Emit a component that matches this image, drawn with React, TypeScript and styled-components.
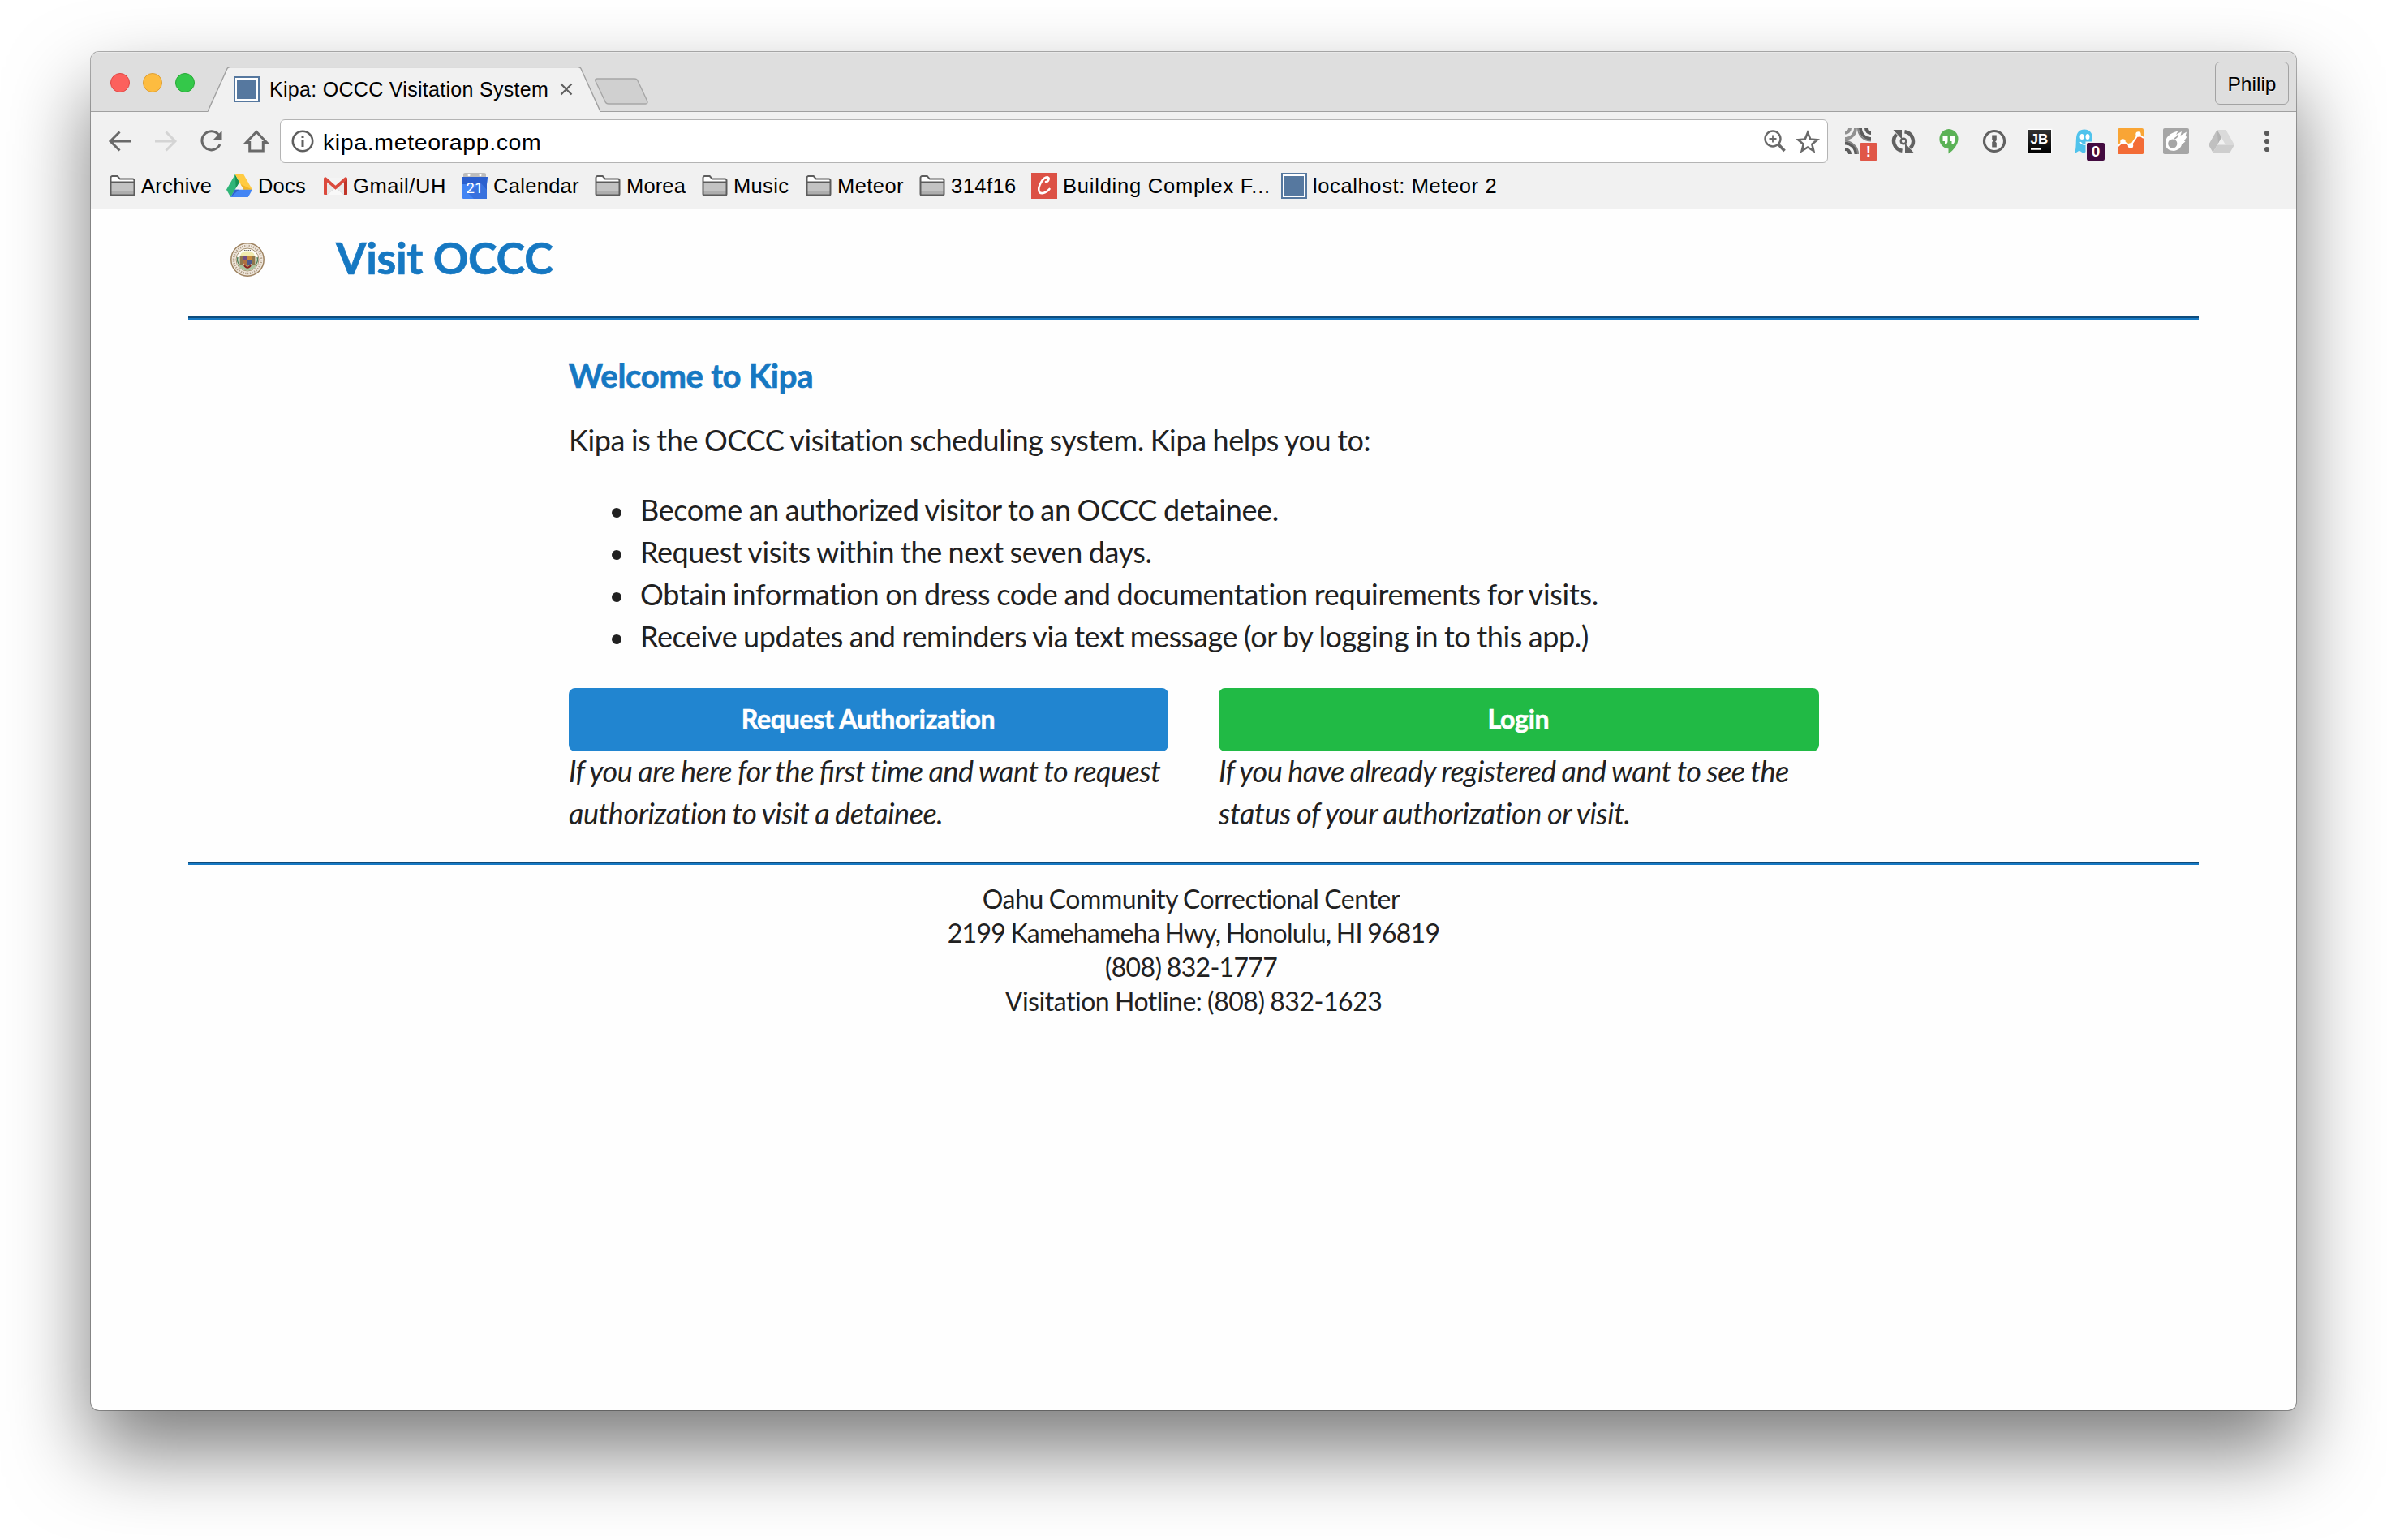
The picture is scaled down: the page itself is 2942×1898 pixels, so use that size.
import React from "react";
import styled, { createGlobalStyle } from "styled-components";

const Global = createGlobalStyle`
  * { box-sizing: border-box; }
  html, body { margin: 0; background: #fff; }
  body { font-family: "Liberation Sans", Arial, sans-serif; color: #000; }
`;

/* ---------- window frame ---------- */

const Desktop = styled.div`
  width: 2942px;
  height: 1898px;
  padding: 64px 112px 160px;
  overflow: hidden;
  background: #fff;
`;

const BrowserWindow = styled.div`
  display: flex;
  flex-direction: column;
  width: 2718px;
  height: 1674px;
  border-radius: 10px;
  overflow: hidden;
  background: #fefefe;
  box-shadow: 0 0 0 1px rgba(0, 0, 0, 0.3), 0 50px 100px rgba(0, 0, 0, 0.52);
`;

const TabStrip = styled.div`
  display: flex;
  flex: none;
  height: 74px;
  padding: 0 9px 0 24px;
  background: #dedede;
  border-bottom: 1px solid #a0a0a0;
  box-shadow: inset 0 1px 0 #e9e9e9;
`;

const TrafficLights = styled.div`
  display: flex;
  gap: 16px;
  width: 120px;
  padding-top: 26px;
`;

const Light = styled.span<{ $fill: string; $edge: string }>`
  width: 24px;
  height: 24px;
  border-radius: 50%;
  background: ${(p) => p.$fill};
  border: 1px solid ${(p) => p.$edge};
`;

const Tab = styled.div`
  position: relative;
  display: flex;
  align-items: center;
  width: 484px;
  height: 56px;
  margin-top: 18px;
  padding-left: 32px;
`;

const TabShape = styled.svg`
  position: absolute;
  left: 0;
  top: 0;
`;

const TabTitle = styled.span`
  position: relative;
  width: 370px;
  padding-left: 12px;
  font-size: 25px;
  letter-spacing: 0.3px;
  line-height: 30px;
  margin-top: -1px;
  white-space: nowrap;
`;

const Favicon = styled.span`
  position: relative;
  flex: none;
  width: 32px;
  height: 32px;
  border: 2px solid #56789f;
  background: #56789f;
  box-shadow: inset 0 0 0 2px #fff;
`;

const CloseIcon = styled.svg`
  position: relative;
`;

const NewTab = styled.svg`
  margin: 32px auto 0 -8px;
`;

const ProfileButton = styled.div`
  width: 91px;
  height: 53px;
  margin-top: 12px;
  border: 1.5px solid #a3a3a3;
  border-radius: 6px;
  font-size: 24.5px;
  line-height: 53px;
  text-align: center;
  text-shadow: 0 1px 0 #f4f4f4;
`;

/* ---------- toolbar ---------- */

const Toolbar = styled.div`
  display: flex;
  flex: none;
  align-items: center;
  height: 70px;
  padding: 2px 0 0 20px;
  background: #f1f1f1;
`;

const NavIcons = styled.div`
  display: flex;
  gap: 24px;
  width: 213px;
`;

const Omnibox = styled.div`
  display: flex;
  align-items: center;
  width: 1908px;
  height: 54px;
  padding: 0 9px 0 13px;
  border: 1.5px solid #b4b4b4;
  border-radius: 6px;
  background: #fff;
`;

const Url = styled.span`
  flex: 1;
  padding: 1px 0 0 11px;
  font-size: 28.5px;
  letter-spacing: 0.62px;
  line-height: 34px;
`;

const Extensions = styled.div`
  display: flex;
  gap: 24px;
  margin-left: 21px;
`;

const Extension = styled.div`
  position: relative;
  width: 32px;
  height: 32px;
`;

const Badge = styled.span<{ $bg: string }>`
  position: absolute;
  left: 18px;
  top: 18px;
  width: 22px;
  height: 22px;
  border-radius: 2px;
  background: ${(p) => p.$bg};
  color: #fff;
  font: bold 19px/22px "Liberation Sans", Arial, sans-serif;
  text-align: center;
`;

const BookmarksBar = styled.div`
  display: flex;
  flex: none;
  align-items: center;
  height: 50px;
  padding: 0 0 7px 23px;
  background: #f1f1f1;
  border-bottom: 1px solid #b2b2b2;
`;

const Bookmark = styled.div<{ $width: number }>`
  display: flex;
  align-items: center;
  gap: 7px;
  width: ${(p) => p.$width}px;
  font-size: 25.5px;
  line-height: 32px;
  white-space: nowrap;
`;

const BookmarkLabel = styled.span<{ $spacing: number }>`
  letter-spacing: ${(p) => p.$spacing}px;
`;

/* ---------- page ---------- */

const Page = styled.div`
  flex: 1;
  padding: 0 120px;
  font-family: Lato, sans-serif;
  color: #212121;
`;

const PageHeader = styled.header`
  display: flex;
  height: 132px;
  padding-left: 52px;
`;

const Seal = styled.svg`
  margin-top: 41px;
`;

const Title = styled.h1`
  margin: 27px 0 0 88px;
  font-size: 54px;
  line-height: 66px;
  font-weight: bold;
  letter-spacing: -0.35px;
  color: #1678c2;
  -webkit-text-stroke: 0.7px #1678c2;
`;

const Rule = styled.hr`
  height: 4px;
  margin: 0;
  border: 0;
  border-top: 2px solid #0f4c7c;
  background: #1678c2;
`;

const Main = styled.main`
  width: 1541px;
  height: 668px;
  margin-left: 469px;
  padding-top: 43px;
`;

const Heading = styled.h3`
  margin: 0;
  font-size: 40px;
  line-height: 52px;
  letter-spacing: -0.28px;
  color: #1678c2;
  -webkit-text-stroke: 0.7px #1678c2;
`;

const Intro = styled.p`
  margin: 27px 0 34px;
  font-size: 36px;
  line-height: 52px;
  letter-spacing: -0.38px;
  word-spacing: -1px;
`;

const Features = styled.ul`
  margin: 0;
  padding: 0;
  list-style: none;
`;

const Feature = styled.li<{ $spacing: number }>`
  display: flex;
  align-items: center;
  height: 52px;
  padding-left: 53px;
  font-size: 36px;
  line-height: 52px;
  letter-spacing: ${(p) => p.$spacing}px;
  word-spacing: -1px;

  &::before {
    content: "";
    width: 12px;
    height: 12px;
    margin: 8px 23px 0 0;
    border-radius: 50%;
    background: #212121;
  }
`;

const Choices = styled.div`
  display: grid;
  grid-template-columns: 739px 740px;
  gap: 62px;
  margin-top: 38px;
`;

const ActionButton = styled.button<{ $bg: string }>`
  display: block;
  width: 100%;
  height: 78px;
  padding: 0 1px 3px 0;
  border: 0;
  border-radius: 8px;
  background: ${(p) => p.$bg};
  color: #fff;
  font: bold 32px Lato, sans-serif;
  letter-spacing: -0.26px;
  -webkit-text-stroke: 0.6px #fff;
`;

const Hint = styled.p`
  margin: -2px 0 0;
  font-size: 36px;
  font-style: italic;
  line-height: 52px;
  word-spacing: -1px;
  white-space: nowrap;
`;

const HintLine = styled.span<{ $spacing: number }>`
  display: block;
  letter-spacing: ${(p) => p.$spacing}px;
`;

const Ligature = styled.span`
  font-feature-settings: "liga" 1;
`;

const Footer = styled.footer`
  padding-top: 21px;
  font-size: 32px;
  line-height: 42px;
  word-spacing: -1px;
  text-align: center;
`;

const FooterLine = styled.div<{ $spacing: number; $inset?: number }>`
  padding-right: ${(p) => p.$inset ?? 0}px;
  letter-spacing: ${(p) => p.$spacing}px;
`;

/* ---------- icons ---------- */

const ink = "#696969";

const FolderIcon = () => (
  <svg width="32" height="28" viewBox="0 0 32 28">
    <path d="M1.5 24V4a2 2 0 0 1 2-2h6.2l3.2 3.6h15.6a2 2 0 0 1 2 2V24a1.5 1.5 0 0 1-1.5 1.5H3A1.5 1.5 0 0 1 1.5 24z" fill="#fff" />
    <path d="M2 9.500h28v15H2z" fill="#c3c3c3" />
    <path d="M2 20h28v5H2z" fill="#adadad" />
    <path d="M1.500 24V4a2 2 0 0 1 2-2h6.200l3.200 3.600h15.600a2 2 0 0 1 2 2V24a1.500 1.500 0 0 1-1.500 1.500H3A1.500 1.500 0 0 1 1.500 24zM2 9.500h28" fill="none" stroke="#5c5c5c" strokeWidth="2" />
  </svg>
);

const DocsIcon = () => (
  <svg width="32" height="28" viewBox="0 0 32 28">
    <path d="M10.800 0L0 18.700 5.300 28 16 9.400z" fill="#2fb578" />
    <path d="M10.800 0L16 9.400l-4.200 7.400z" fill="#179255" />
    <path d="M10.800 0h10.500L32 18.700H21.400z" fill="#ffcb42" />
    <path d="M32 18.700H21.400L17.600 12z" fill="#f0b429" />
    <path d="M10.600 18.700H32L26.700 28H5.300z" fill="#4385f4" />
    <path d="M10.600 18.700h5L5.300 28z" fill="#2f62c9" />
  </svg>
);

const GmailIcon = () => (
  <svg width="29" height="22" viewBox="0 0 29 22">
    <path d="M3 1h23v21H3z" fill="#e9e9e9" />
    <path d="M4 22l10.500-9L25 22" fill="#f8f8f8" stroke="#d6d6d6" strokeWidth=".8" />
    <path d="M4 1h21l-10.500 9.500z" fill="#f4f4f4" />
    <path d="M0 2.500A2 2 0 0 1 3.500 1l11 9.800L25.500 1A2 2 0 0 1 29 2.500V21a1 1 0 0 1-1 1h-3V6.500l-10.500 9.300L4 6.500V22H1a1 1 0 0 1-1-1z" fill="#db4a3d" />
    <path d="M25 6.500L29 3v18a1 1 0 0 1-1 1h-3z" fill="#c03428" />
  </svg>
);

const CalendarIcon = () => (
  <svg width="32" height="32" viewBox="0 0 32 32">
    <path d="M2 7V2a2 2 0 0 1 2-2h24a2 2 0 0 1 2 2v5z" fill="#bdbdbd" />
    <circle cx="9" cy="2.800" r="1.500" fill="#fff" />
    <circle cx="23" cy="2.800" r="1.500" fill="#fff" />
    <path d="M0 5h32l-1 9v17a1 1 0 0 1-1 1H2a1 1 0 0 1-1-1V14z" fill="#4285f4" />
    <path d="M0 5h32l-1 9v9L22 14H1z" fill="#2b5fce" />
    <path d="M24 13l7 8v11H15l-8-8z" fill="#3871de" />
    <text x="16" y="25" textAnchor="middle" fill="#fff" fontFamily="Roboto, sans-serif" fontSize="18.500">21</text>
  </svg>
);

const CourseIcon = () => (
  <svg width="32" height="32" viewBox="0 0 32 32">
    <path d="M0 0h32v32H0z" fill="#dc5145" />
    <path d="M18 11c3 .500 5.300-5 2.300-5.600C14.500 4.500 8 17 9.500 22.500c1.300 4.500 8.500 3 13-2.500" fill="none" stroke="#fff" strokeWidth="2.600" strokeLinecap="round" />
  </svg>
);

const BackIcon = ({ color, flip }: { color: string; flip?: boolean }) => (
  <svg width="32" height="32" viewBox="0 0 32 32">
    <path
      d={flip ? "M3 16h24M16.500 4.500L28 16 16.500 27.500" : "M29 16H4M15.500 4.500L4 16l11.500 11.500"}
      fill="none" stroke={color} strokeWidth="3"
    />
  </svg>
);

const ReloadIcon = () => (
  <svg width="32" height="32" viewBox="0 0 32 32">
    <path d="M25.500 8.200A11.500 11.500 0 1 0 27 20" fill="none" stroke={ink} strokeWidth="3" />
    <path d="M29.500 3v11.500H18.500z" fill={ink} />
  </svg>
);

const HomeIcon = () => (
  <svg width="32" height="32" viewBox="0 0 32 32">
    <path d="M3.500 17.500L16 4.500l12.500 13h-4.200V28H7.700V17.500z" fill="none" stroke={ink} strokeWidth="3" />
  </svg>
);

const InfoIcon = () => (
  <svg width="28" height="28" viewBox="0 0 28 28">
    <circle cx="14" cy="14" r="12.200" fill="none" stroke="#5f5f5f" strokeWidth="2.600" />
    <path d="M12.500 7h3v3h-3zM12.500 12h3v9h-3z" fill="#5f5f5f" />
  </svg>
);

const ZoomIcon = () => (
  <svg width="40" height="32" viewBox="0 0 40 32">
    <circle cx="12" cy="13" r="9.500" fill="none" stroke={ink} strokeWidth="2.400" />
    <path d="M12 8.500v9M7.500 13h9" stroke={ink} strokeWidth="1.800" />
    <path d="M18.500 19.500l8 8.500" stroke={ink} strokeWidth="3.600" />
  </svg>
);

const StarIcon = () => (
  <svg width="30" height="32" viewBox="0 0 30 32">
    <path d="M15 5.500l3.300 8 8.500.700-6.500 5.500 2 8.300-7.300-4.500-7.300 4.500 2-8.300L3.200 14.200l8.500-.700z" fill="none" stroke={ink} strokeWidth="2.600" />
  </svg>
);

const HatchIcon = () => (
  <svg width="32" height="32" viewBox="0 0 32 32">
    <g fill="none" strokeWidth="4">
      <path d="M0 5.500A5.500 5.500 0 0 0 6 0M0 13A13 13 0 0 0 13 0" stroke="#919191" />
      <path d="M26 0a6 6 0 0 0 6 6M19 0a13 13 0 0 0 13 13" stroke="#5c5c5c" />
      <path d="M0 18.500A13.500 13.500 0 0 1 13.500 32M0 26a6 6 0 0 1 6 6" stroke="#5c5c5c" />
      <path d="M16 0c0 9 7 15 16 15.500M0 15.500C7 16 16 22 16 32" stroke="#858585" strokeWidth="2" />
    </g>
  </svg>
);

const SyncIcon = () => (
  <svg width="32" height="32" viewBox="0 0 32 32">
    <path d="M7.500 7.500A12 12 0 0 0 14.500 27.800M17.500 4.200A12 12 0 0 1 24.500 24.500" fill="none" stroke="#616161" strokeWidth="4.400" />
    <path d="M3.500 2H14v11.500zM28.500 30H18V18.500z" fill="#616161" />
    <circle cx="16" cy="16" r="3.300" fill="none" stroke="#616161" strokeWidth="2.400" />
  </svg>
);

const HangoutsIcon = () => (
  <svg width="32" height="32" viewBox="0 0 32 32">
    <path d="M15.500 1a12 12 0 0 1 12 12c0 7.500-6 14.500-12 18.500V25.300A12.200 12.200 0 0 1 15.500 1z" fill="#5bb256" />
    <path d="M8.500 9.500h6v6.500c0 2-1 3.500-3.500 4v-4H8.500zM17 9.500h6v6.500c0 2-1 3.500-3.500 4v-4H17z" fill="#fff" />
  </svg>
);

const PasswordIcon = () => (
  <svg width="32" height="32" viewBox="0 0 32 32">
    <circle cx="16" cy="16" r="12.500" fill="#f5f5f5" stroke="#616161" strokeWidth="3.200" />
    <path d="M13.200 8.500h5.600v6.500l-1.600 1.500 1.600 1.500v5.500h-5.600V17l1.600-1.500-1.600-1.500z" fill="#616161" />
  </svg>
);

const JetBrainsIcon = () => (
  <svg width="32" height="32" viewBox="0 0 32 32">
    <defs>
      <linearGradient id="jb" x1="0" y1="0" x2="0" y2="1"><stop stopColor="#333" /><stop offset="1" stopColor="#000" /></linearGradient>
    </defs>
    <path d="M.700.700h30.600v30.600H.700z" fill="#fff" />
    <path d="M2 2h28v28H2z" fill="url(#jb)" />
    <text x="4.500" y="18.500" fill="#fff" fontFamily="Liberation Sans, sans-serif" fontWeight="bold" fontSize="17">JB</text>
    <path d="M5 24.500h12v2.200H5z" fill="#fff" />
  </svg>
);

const GhostIcon = () => (
  <svg width="32" height="32" viewBox="0 0 32 32">
    <path d="M15 1.500c6.500 0 10 4.500 10 10.500v18c-2.500 1-4-2-6-2s-2.500 2.500-5 2.500-3-2.500-5-2.500-3.500 3-6 2C5 26 4.500 19 5 12 5.500 5.500 9 1.500 15 1.500z" fill="#50c3ec" />
    <ellipse cx="12" cy="10.500" rx="2.500" ry="3.500" fill="#fff" />
    <ellipse cx="19" cy="10.500" rx="2.500" ry="3.500" fill="#fff" />
    <path d="M10 17c2 4 8.500 4 10.500 0" fill="none" stroke="#fff" strokeWidth="1.600" />
    <path d="M16.500 16.500H32V32H16.500z" fill="#f1f1f1" />
  </svg>
);

const AnalyticsIcon = () => (
  <svg width="32" height="32" viewBox="0 0 32 32">
    <rect width="32" height="32" rx="2" fill="#f9a535" />
    <path d="M0 22.500l6.500-6 9.500 5 9.500-14L32 12v18a2 2 0 0 1-2 2H2a2 2 0 0 1-2-2z" fill="#f36c36" />
    <path d="M0 22.500l6.500-6 9.500 5 9.500-14L32 12" fill="none" stroke="#fff" strokeWidth="2" />
    <circle cx="6.500" cy="16.500" r="3.200" fill="#fff" />
    <circle cx="16" cy="21.500" r="3.200" fill="#fff" />
    <circle cx="25.500" cy="7.500" r="3.200" fill="#fff" />
  </svg>
);

const CometIcon = () => (
  <svg width="32" height="32" viewBox="0 0 32 32">
    <rect width="32" height="32" rx="2" fill="#a6a6a6" />
    <path d="M3 20C2 11 9 5.500 18.500 3.500L16 8l7-4-1.500 5L29 4.500 27.500 10l2 .500-3.500 5 1.500 1-4.500 3.500C22 25 16.500 28.500 11.500 27.800 6.500 27.500 3.300 24 3 20z" fill="#fff" />
    <circle cx="11.800" cy="19" r="5.600" fill="#a6a6a6" />
    <path d="M14 13c2.500-1 4-3 4.500-5" stroke="#a6a6a6" strokeWidth="1.500" fill="none" />
  </svg>
);

const DriveIcon = () => (
  <svg width="32" height="32" viewBox="0 0 32 32">
    <path d="M10.500 2L0 20.500 5.500 30 16 11.300z" fill="#c0c0c0" />
    <path d="M10.500 2h11L32 20.500H21z" fill="#dadada" />
    <path d="M10.800 20.500H32L26.500 30h-21z" fill="#cecece" />
    <path d="M10.500 2L16 11.300l-4 7z" fill="#b3b3b3" />
  </svg>
);

const MenuIcon = () => (
  <svg width="32" height="32" viewBox="0 0 32 32" fill="#5a5a5a">
    <circle cx="16" cy="6" r="3.100" />
    <circle cx="16" cy="16" r="3.100" />
    <circle cx="16" cy="26" r="3.100" />
  </svg>
);

const StateSeal = () => (
  <Seal width="42" height="42" viewBox="0 0 42 42">
    <circle cx="21" cy="21" r="20.200" fill="#efe7dc" stroke="#9d8260" strokeWidth="1.500" />
    <circle cx="21" cy="21" r="17" fill="none" stroke="#b3a08a" strokeWidth="2.600" strokeDasharray="1.300 1.500" />
    <circle cx="21" cy="21" r="14" fill="#fdfcf6" stroke="#a59070" strokeWidth="1" />
    <path d="M12.500 15.500a8.500 5 0 0 1 17 0v2h-17z" fill="#f0ebae" />
    <path d="M17 9.500h8" stroke="#666" strokeWidth="1.200" strokeDasharray="1.500 .800" />
    <path d="M9 25c2 8 9 9.500 12 9.500S31 33 33 25l-6 3H15z" fill="#a9c29c" />
    <path d="M11.500 17h4v11h-4zM26.500 17h4v11h-4z" fill="#8f774c" />
    <path d="M9 18c-1 4 0 7 2 9M33 18c1 4 0 7-2 9" stroke="#4f7f58" strokeWidth="1.500" fill="none" />
    <path d="M16 17h10v8c0 2-3 3.500-5 4-2-.500-5-2-5-4z" fill="#b0703f" />
    <path d="M16 17h5v5h-5z" fill="#6f4c85" />
    <path d="M21 22h5v4l-5 2z" fill="#4f5a89" />
    <path d="M21 17h5v5h-5z" fill="#c6893d" />
    <path d="M17 28c2 3.500 6 3.500 8 0" stroke="#8c2420" strokeWidth="2" fill="none" />
  </Seal>
);

/* ---------- data ---------- */

const bookmarks = [
  { label: "Archive", icon: <FolderIcon />, width: 144, spacing: 0.3 },
  { label: "Docs", icon: <DocsIcon />, width: 120, spacing: 0.2 },
  { label: "Gmail/UH", icon: <GmailIcon />, width: 170, spacing: 0.55 },
  { label: "Calendar", icon: <CalendarIcon />, width: 164, spacing: 0.3 },
  { label: "Morea", icon: <FolderIcon />, width: 132, spacing: 0.15 },
  { label: "Music", icon: <FolderIcon />, width: 128, spacing: 0.35 },
  { label: "Meteor", icon: <FolderIcon />, width: 140, spacing: 0.45 },
  { label: "314f16", icon: <FolderIcon />, width: 138, spacing: 0.45 },
  { label: "Building Complex F...", icon: <CourseIcon />, width: 308, spacing: 0.78 },
  { label: "localhost: Meteor 2", icon: <Favicon />, width: 300, spacing: 0.62 },
];

const extensions = [
  { icon: <HatchIcon />, badge: "!", bg: "#e05748" },
  { icon: <SyncIcon /> },
  { icon: <HangoutsIcon /> },
  { icon: <PasswordIcon /> },
  { icon: <JetBrainsIcon /> },
  { icon: <GhostIcon />, badge: "0", bg: "#430b40" },
  { icon: <AnalyticsIcon /> },
  { icon: <CometIcon /> },
  { icon: <DriveIcon /> },
  { icon: <MenuIcon /> },
];

const features = [
  { text: "Become an authorized visitor to an OCCC detainee.", spacing: -0.35 },
  { text: "Request visits within the next seven days.", spacing: -0.4 },
  { text: "Obtain information on dress code and documentation requirements for visits.", spacing: -0.29 },
  { text: "Receive updates and reminders via text message (or by logging in to this app.)", spacing: -0.39 },
];

export default function App() {
  return (
    <>
      <Global />
      <Desktop>
        <BrowserWindow>
          <TabStrip>
            <TrafficLights>
              <Light $fill="#fc615d" $edge="#df4744" />
              <Light $fill="#fdbc40" $edge="#de9f34" />
              <Light $fill="#34c84a" $edge="#27aa35" />
            </TrafficLights>
            <Tab>
              <TabShape width="484" height="56" viewBox="0 0 484 56">
                <path d="M0 56L24 2.500Q25 .500 28 .500H456Q459 .500 460 2.500L484 56z" fill="#f1f1f1" />
                <path d="M0 55.500L24 2.500Q25 .500 28 .500H456Q459 .500 460 2.500L484 55.500" fill="none" stroke="#a0a0a0" strokeWidth="1.400" />
              </TabShape>
              <Favicon />
              <TabTitle>Kipa: OCCC Visitation System</TabTitle>
              <CloseIcon width="16" height="16" viewBox="0 0 16 16">
                <path d="M1.500 1.500l13 13M14.500 1.500l-13 13" stroke="#5f5f5f" strokeWidth="2.200" />
              </CloseIcon>
            </Tab>
            <NewTab width="68" height="34" viewBox="0 0 68 34">
              <path d="M4 1h46q3 0 4 2.500L65.500 28q1.500 4-2 4H18q-3 0-4-2.500L2 4Q1 1 4 1z" fill="#d0d0d0" stroke="#a6a6a6" strokeWidth="1.400" />
            </NewTab>
            <ProfileButton>Philip</ProfileButton>
          </TabStrip>
          <Toolbar>
            <NavIcons>
              <BackIcon color={ink} />
              <BackIcon color="#d4d4d4" flip />
              <ReloadIcon />
              <HomeIcon />
            </NavIcons>
            <Omnibox>
              <InfoIcon />
              <Url>kipa.meteorapp.com</Url>
              <ZoomIcon />
              <StarIcon />
            </Omnibox>
            <Extensions>
              {extensions.map((e, i) => (
                <Extension key={i}>
                  {e.icon}
                  {e.badge && <Badge $bg={e.bg!}>{e.badge}</Badge>}
                </Extension>
              ))}
            </Extensions>
          </Toolbar>
          <BookmarksBar>
            {bookmarks.map((b) => (
              <Bookmark key={b.label} $width={b.width}>
                {b.icon}
                <BookmarkLabel $spacing={b.spacing}>{b.label}</BookmarkLabel>
              </Bookmark>
            ))}
          </BookmarksBar>
          <Page>
            <PageHeader>
              <StateSeal />
              <Title>Visit OCCC</Title>
            </PageHeader>
            <Rule />
            <Main>
              <Heading>Welcome to Kipa</Heading>
              <Intro>Kipa is the OCCC visitation scheduling system. Kipa helps you to:</Intro>
              <Features>
                {features.map((f) => (
                  <Feature key={f.text} $spacing={f.spacing}>{f.text}</Feature>
                ))}
              </Features>
              <Choices>
                <div>
                  <ActionButton $bg="#2185d0">Request Authorization</ActionButton>
                  <Hint>
                    <HintLine $spacing={-0.51}>
                      If you are here for the <Ligature>fi</Ligature>rst time and want to request
                    </HintLine>
                    <HintLine $spacing={-0.46}>authorization to visit a detainee.</HintLine>
                  </Hint>
                </div>
                <div>
                  <ActionButton $bg="#21ba45">Login</ActionButton>
                  <Hint>
                    <HintLine $spacing={-0.51}>If you have already registered and want to see the</HintLine>
                    <HintLine $spacing={-0.4}>status of your authorization or visit.</HintLine>
                  </Hint>
                </div>
              </Choices>
            </Main>
            <Rule />
            <Footer>
              <FooterLine $spacing={-0.43} $inset={6}>Oahu Community Correctional Center</FooterLine>
              <FooterLine $spacing={-0.74}>2199 Kamehameha Hwy, Honolulu, HI 96819</FooterLine>
              <FooterLine $spacing={-0.68} $inset={6}>(808) 832-1777</FooterLine>
              <FooterLine $spacing={-0.47}>Visitation Hotline: (808) 832-1623</FooterLine>
            </Footer>
          </Page>
        </BrowserWindow>
      </Desktop>
    </>
  );
}
